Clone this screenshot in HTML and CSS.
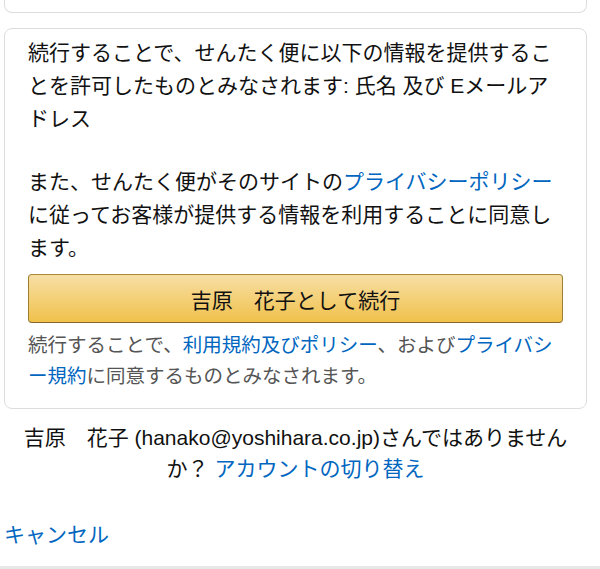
FILE: index.html
```html
<!DOCTYPE html>
<html lang="ja">
<head>
    <meta charset="UTF-8">
    <meta name="viewport" content="width=device-width, initial-scale=1.0">
    <title>せんたく便 - アカウント連携</title>
    <link rel="stylesheet" href="styles.css">
</head>
<body>

    <!-- previous box, only its bottom edge is on screen -->
    <div class="box box-prev"></div>

    <!-- consent box -->
    <div class="box consent">
        <p class="consent-text">続行することで、せんたく便に以下の情報を提供することを許可したものとみなされます: 氏名 及び Eメールアドレス</p>
        <p class="consent-text gap">また、せんたく便がそのサイトの<a href="#">プライバシーポリシー</a>に従ってお客様が提供する情報を利用することに同意します。</p>
        <button class="btn-continue">吉原　花子として続行</button>
        <p class="legal">続行することで、<a href="#">利用規約及びポリシー</a>、および<a href="#">プライバシー規約</a>に同意するものとみなされます。</p>
    </div>

    <p class="switch">吉原　花子 (hanako@yoshihara.co.jp)さんではありませんか？ <a href="#">アカウントの切り替え</a></p>

    <p class="cancel"><a href="#">キャンセル</a></p>

    <div class="footer-bar"></div>

</body>
</html>
```

FILE: styles.css
```css
body { margin: 0; font-family: "Liberation Sans", "Noto Sans CJK JP", sans-serif; color: #111; background: #fff; }
a { color: #0066c0; text-decoration: none; }
p { margin: 0; }

.box { margin: 0 13px 0 4px; border: 1px solid #ddd; border-radius: 8px; background: #fff; }
.box-prev { height: 12px; border-top: none; border-radius: 0 0 8px 8px; }

.consent { margin-top: 15px; padding: 7px 23px 16px; }
.consent-text { font-size: 21px; line-height: 33px; }
.consent-text.gap { margin-top: 30px; }

.btn-continue {
    display: block; width: 100%; height: 49px; margin-top: 10px;
    font: inherit; font-size: 21px; color: #111;
    background: linear-gradient(to bottom, #f7dfa5, #f0c14b);
    border: 1px solid; border-color: #a88734 #9c7e31 #846a29;
    border-radius: 4px; cursor: pointer;
}

.legal { margin-top: 7px; font-size: 19.5px; line-height: 31px; color: #555; }

.switch { margin: 13px 13px 0 4px; padding: 0 12px; text-align: center; font-size: 21px; line-height: 31px; }

.cancel { margin: 35px 0 0 4px; font-size: 21px; line-height: 31px; }

.footer-bar { margin-top: 16px; height: 10px; background: #e7e7e7; }
```
